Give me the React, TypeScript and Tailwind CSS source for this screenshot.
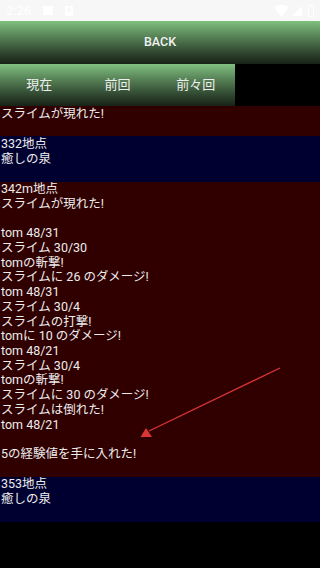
import React from "react";

type Entry = { kind: "battle" | "rest"; lines: string[] };

const entries: Entry[] = [
  { kind: "rest", lines: ["332地点", "癒しの泉", ""] },
  {
    kind: "battle",
    lines: [
      "342m地点",
      "スライムが現れた!",
      "",
      "tom 48/31",
      "スライム 30/30",
      "tomの斬撃!",
      "スライムに 26 のダメージ!",
      "tom 48/31",
      "スライム 30/4",
      "スライムの打撃!",
      "tomに 10 のダメージ!",
      "tom 48/21",
      "スライム 30/4",
      "tomの斬撃!",
      "スライムに 30 のダメージ!",
      "スライムは倒れた!",
      "tom 48/21",
      "",
      "5の経験値を手に入れた!",
      "",
    ],
  },
  { kind: "rest", lines: ["353地点", "癒しの泉", ""] },
];

function StatusBar() {
  return (
    <div className="flex h-[21px] items-center justify-between bg-[#f7f7f7] px-[6px] text-white">
      <div className="flex items-center gap-[12px]">
        <span className="text-[13px] leading-none">2:26</span>
        <span className="block h-[9px] w-[10px] rounded-[1px] bg-white" />
        <span className="flex h-[10px] w-[8px] items-center justify-center rounded-[1px] bg-white text-[7px] font-bold text-[#f7f7f7]">
          A
        </span>
      </div>
      <div className="flex items-center gap-[3px]">
        <svg width="15" height="12" viewBox="0 0 15 12">
          <path d="M0 2 Q7.5 -2 15 2 L7.5 12 Z" fill="#fff" />
        </svg>
        <svg width="10" height="10" viewBox="0 0 10 10">
          <path d="M10 0 V10 H0 Z" fill="#fff" />
        </svg>
        <span className="ml-[3px] block h-[12px] w-[6px] rounded-[1px] border border-white" />
      </div>
    </div>
  );
}

function Section({ entry, className = "" }: { entry: Entry; className?: string }) {
  const bg = entry.kind === "battle" ? "bg-[#300000]" : "bg-[#000030]";
  return (
    <div className={`${bg} px-[1px] py-[0.5px] ${className}`}>
      {entry.lines.map((l, i) => (
        <div key={i} className="h-[14.72px] whitespace-pre">
          {l}
        </div>
      ))}
    </div>
  );
}

export default function App() {
  const tabs = ["現在", "前回", "前々回"];
  return (
    <div
      className="relative h-[568px] w-[320px] overflow-hidden bg-black"
      style={{ fontFamily: 'Roboto, "Noto Sans CJK JP", sans-serif' }}
    >
      <StatusBar />
      <button
        type="button"
        className="flex h-[43px] w-full items-center justify-center bg-linear-to-b from-[#80c080] to-[#172217] text-[12.5px] font-medium text-[#f2f2f2]"
      >
        BACK
      </button>
      <div className="flex h-[42px] w-[235px] bg-linear-to-b from-[#80c080] to-[#172217]">
        {tabs.map((t) => (
          <div
            key={t}
            className="flex flex-1 items-center justify-center text-[13px] text-[#eeeeee]"
          >
            {t}
          </div>
        ))}
      </div>
      <div className="h-[462px] overflow-hidden text-[12.5px] leading-[14.72px] text-[#ececec]">
        <Section entry={{ kind: "battle", lines: ["スライムが現れた!", ""] }} />
        {entries.map((e, i) => (
          <Section key={i} entry={e} />
        ))}
      </div>
      <svg
        className="pointer-events-none absolute left-0 top-0"
        width="320"
        height="568"
        viewBox="0 0 320 568"
      >
        <line x1="280" y1="368" x2="149" y2="431" stroke="#d93636" strokeWidth="1.3" />
        <polygon points="140.5,437 152,437 146,428" fill="#d93636" />
      </svg>
    </div>
  );
}
